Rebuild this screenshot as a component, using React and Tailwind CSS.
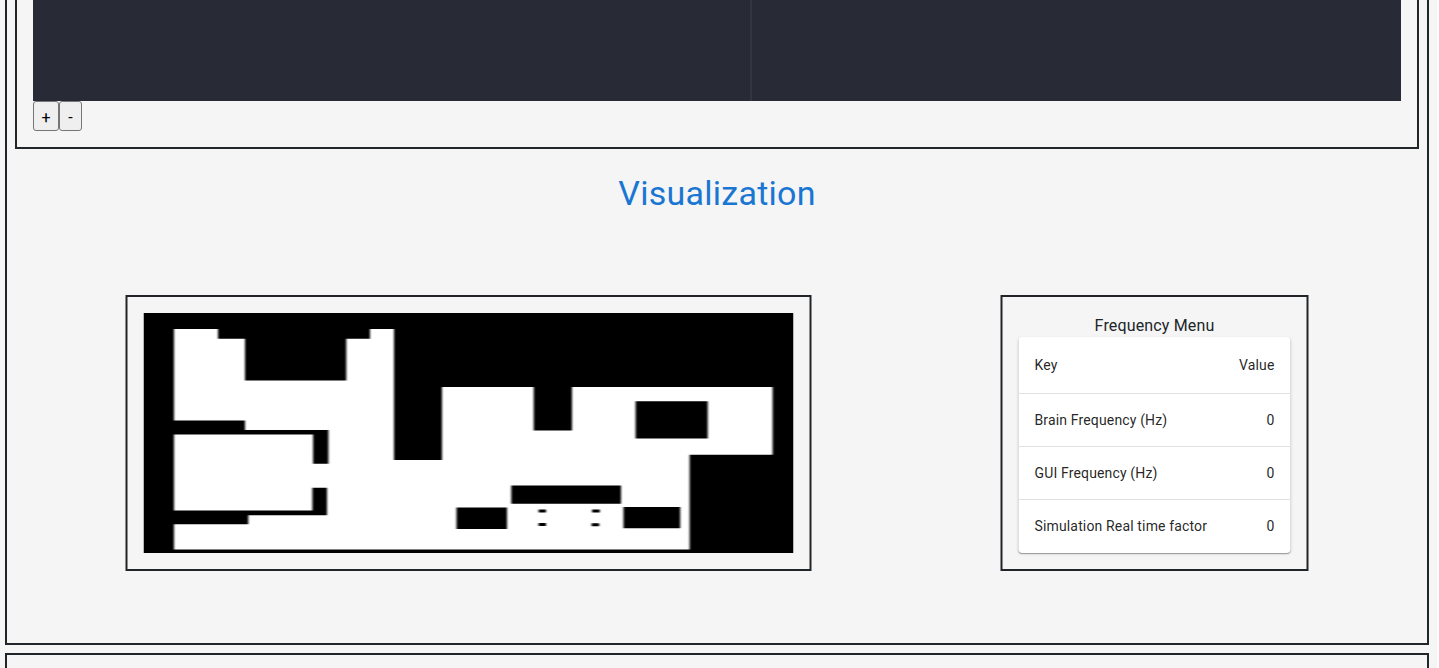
const rows = [
  ['Brain Frequency (Hz)', '0'],
  ['GUI Frequency (Hz)', '0'],
  ['Simulation Real time factor', '0'],
];

function EditorPanel() {
  return (
    <section className="h-[149px] border-x-2 border-b-2 border-[#212529] px-4">
      <div className="flex h-[101px] bg-[#282a36]">
        <div className="w-[719px] border-r-2 border-[#34353f]" />
      </div>
      <div className="flex font-['Roboto',sans-serif] text-base text-black">
        <button className="h-[30px] w-[26px] rounded-[3px] border border-[#767676] bg-[#efefef] pt-[4px] leading-none">+</button>
        <button className="h-[30px] w-[23px] rounded-[3px] border border-[#767676] bg-[#efefef] pt-[4px] leading-none">-</button>
      </div>
    </section>
  );
}

function FloorMap() {
  return (
    <svg className="block h-[240px] w-[650px]" viewBox="143.5 313 650 240">
      <defs>
        <filter id="soften" x="-2%" y="-2%" width="104%" height="104%" colorInterpolationFilters="sRGB">
          <feGaussianBlur stdDeviation="0.8 0.35" />
        </filter>
      </defs>
      <rect x="143.5" y="313" width="650" height="240" fill="#000" />
      <g filter="url(#soften)">
        <path
          fill="#fff"
          d="M174 329H218V338.7H245V380.4H346.3V338.7H370V329H394V460H442V387H533.7V430.5H572V387H772.6V454.7H689.6V549.4H174V524.2H248.3V515.3H327V487.7H312.4V510.4H174V434.4H313.1V463.7H328.4V430H245V420.4H174Z"
        />
        <path
          fill="#000"
          d="M635.6 401.3H707.7V438.6H635.6ZM511.3 485.4H621V503.7H511.3ZM456.5 507.6H507V529H456.5ZM623.5 507H680.2V528.2H623.5ZM538.6 509.4H546V512.5H538.6ZM538.6 523H546V526H538.6ZM592.1 509.4H599.8V512.5H592.1ZM591.6 523.2H599.2V526.2H591.6Z"
        />
      </g>
    </svg>
  );
}

function FrequencyMenu() {
  return (
    <div className="h-[276px] w-[308px] translate-x-[0.5px] border-2 border-[#212529] p-4 text-[#212529]">
      <div className="h-6 text-center text-base leading-[26px] tracking-[0.15px]">Frequency Menu</div>
      <div className="h-[216px] rounded bg-white text-sm tracking-[0.15px] text-black/87 shadow-[0_2px_1px_-1px_rgba(0,0,0,0.2),0_1px_1px_0_rgba(0,0,0,0.14),0_1px_3px_0_rgba(0,0,0,0.12)]">
        <div className="flex h-[57px] items-center justify-between border-b border-[#e0e0e0] px-4">
          <span>Key</span>
          <span>Value</span>
        </div>
        {rows.map(([label, value]) => (
          <div key={label} className="flex h-[53px] items-center justify-between border-b border-[#e0e0e0] px-4 last:border-transparent">
            <span>{label}</span>
            <span>{value}</span>
          </div>
        ))}
      </div>
    </div>
  );
}

export default function App() {
  return (
    <div className="h-[668px] w-[1437px] overflow-hidden bg-[#f5f5f5] pl-[5px] font-['Roboto',sans-serif]">
      <main className="h-[645px] w-[1424px] border-x-2 border-b-2 border-[#212529] px-2">
        <EditorPanel />
        <h1 className="mt-[23px] text-center text-[34px] leading-[42px] tracking-[0.25px] text-[#1976d2]">Visualization</h1>
        <div className="mt-[81px] flex justify-between pl-[110px] pr-[111px]">
          <div className="h-[276px] w-[686px] translate-x-[0.5px] border-2 border-[#212529] p-4">
            <FloorMap />
          </div>
          <FrequencyMenu />
        </div>
      </main>
      <section className="mt-2 h-10 w-[1424px] border-2 border-[#212529]" />
    </div>
  );
}
